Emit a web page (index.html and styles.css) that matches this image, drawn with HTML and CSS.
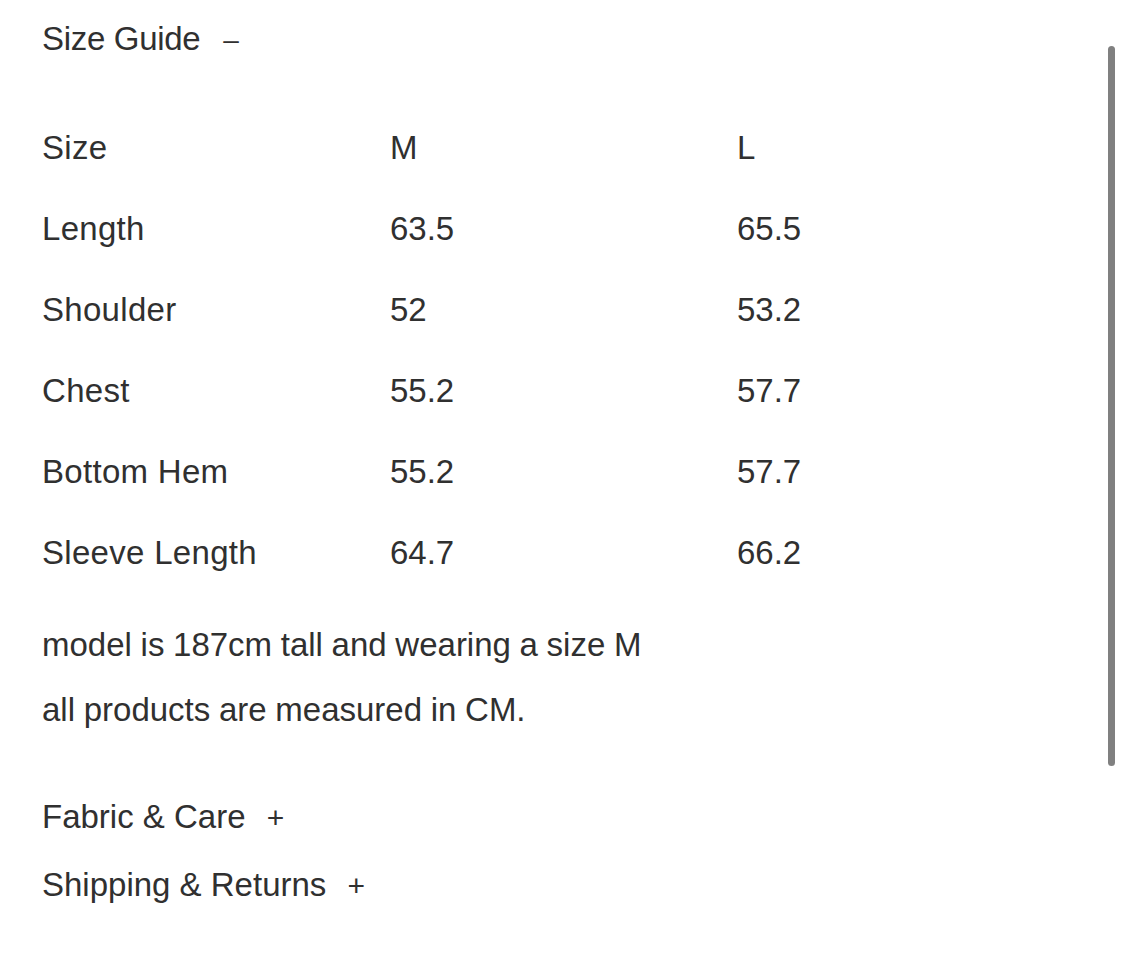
FILE: index.html
```html
<!DOCTYPE html>
<html lang="en">
<head>
<meta charset="utf-8">
<title>Size Guide</title>
<link rel="stylesheet" href="styles.css">
</head>
<body>
<main class="panel">
  <h2 class="acc-title head">Size Guide <span class="acc-sign minus">–</span></h2>
  <div class="size-table">
    <div class="cell">Size</div><div class="cell">M</div><div class="cell">L</div>
    <div class="cell">Length</div><div class="cell">63.5</div><div class="cell">65.5</div>
    <div class="cell">Shoulder</div><div class="cell">52</div><div class="cell">53.2</div>
    <div class="cell">Chest</div><div class="cell">55.2</div><div class="cell">57.7</div>
    <div class="cell">Bottom Hem</div><div class="cell">55.2</div><div class="cell">57.7</div>
    <div class="cell">Sleeve Length</div><div class="cell">64.7</div><div class="cell">66.2</div>
  </div>
  <div class="notes">
    <p>model is 187cm tall and wearing a size M</p>
    <p>all products are measured in CM.</p>
  </div>
  <div class="acc-list">
    <h2 class="acc-title">Fabric &amp; Care <span class="acc-sign">+</span></h2>
    <h2 class="acc-title">Shipping &amp; Returns <span class="acc-sign">+</span></h2>
  </div>
</main>
<div class="scrollbar"></div>
</body>
</html>
```
FILE: styles.css
```css
html, body {
  margin: 0;
  padding: 0;
  background: #ffffff;
}
body {
  font-family: "Liberation Sans", Arial, sans-serif;
  font-size: 33px;
  color: #303030;
  width: 1125px;
  height: 971px;
  overflow: hidden;
}
.panel {
  padding: 19px 0 0 42px;
}
.acc-title {
  margin: 0;
  font-size: 33px;
  font-weight: 400;
  line-height: 40px;
}
.acc-title.head {
  letter-spacing: -0.3px;
}
.acc-sign {
  margin-left: 12px;
  font-size: 30px;
  letter-spacing: 0;
}
.acc-sign.minus {
  font-size: 28px;
  margin-left: 14px;
  position: relative;
  top: -1px;
}
.size-table {
  margin-top: 46px;
  display: grid;
  grid-template-columns: 348px 347px 1fr;
  grid-auto-rows: 81px;
  line-height: 81px;
}
.cell:nth-child(3n+1) {
  letter-spacing: 0.3px;
}
.notes {
  margin-top: 19px;
}
.notes p {
  margin: 0;
  line-height: 65px;
  letter-spacing: 0;
  word-spacing: -0.5px;
}
.acc-list {
  margin-top: 41px;
}
.acc-list .acc-title {
  line-height: 67px;
}
.scrollbar {
  position: absolute;
  left: 1108px;
  top: 46px;
  width: 7px;
  height: 720px;
  border-radius: 4px;
  background: #808080;
}
```
